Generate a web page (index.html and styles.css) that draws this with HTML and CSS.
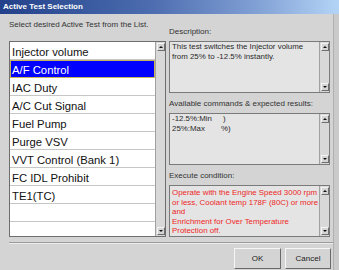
FILE: index.html
```html
<!DOCTYPE html>
<html lang="en">
<head>
  <meta charset="UTF-8">
  <title>Active Test Selection</title>
  <link rel="stylesheet" href="styles.css">
</head>
<body>
  <div class="window">
    <div class="titlebar">Active Test Selection</div>
    <div class="body">
      <div class="main">
        <div class="panes">
          <div class="left">
            <p class="hint">Select desired Active Test from the List.</p>
            <div class="listbox">
              <ul class="items">
                <li>Injector volume</li>
                <li class="selected">A/F Control</li>
                <li>IAC Duty</li>
                <li>A/C Cut Signal</li>
                <li>Fuel Pump</li>
                <li>Purge VSV</li>
                <li>VVT Control (Bank 1)</li>
                <li>FC IDL Prohibit</li>
                <li>TE1(TC)</li>
                <li></li>
                <li></li>
              </ul>
              <div class="scrollbar">
                <span class="arrow up"></span>
                <span class="arrow down"></span>
              </div>
            </div>
          </div>

          <div class="right">
            <p class="label">Description:</p>
            <div class="textbox">
              <div class="text">This test switches the Injector volume<br>from 25% to -12.5% instantly.</div>
              <div class="scrollbar">
                <span class="arrow up"></span>
                <span class="arrow down"></span>
              </div>
            </div>

            <p class="label">Available commands &amp; expected results:</p>
            <div class="textbox">
              <div class="text">
                <span class="cmd">-12.5%:Min</span>)<br>
                <span class="cmd short">25%:Max</span>%)
              </div>
              <div class="scrollbar">
                <span class="arrow up"></span>
                <span class="arrow down"></span>
              </div>
            </div>

            <p class="label">Execute condition:</p>
            <div class="textbox cond">
              <div class="text">Operate with the Engine Speed 3000 rpm<br>or less, Coolant temp 178F (80C) or more<br>and<br>Enrichment for Over Temperature<br>Protection off.</div>
              <div class="scrollbar">
                <span class="arrow up"></span>
                <span class="arrow down"></span>
              </div>
            </div>
          </div>
        </div>

        <div class="footer">
          <button class="btn ok">OK</button>
          <button class="btn cancel">Cancel</button>
        </div>
      </div>
      <div class="edge"></div>
    </div>
  </div>
</body>
</html>
```

FILE: styles.css
```css
body {
  margin: 0;
  font-family: "Liberation Sans", Arial, sans-serif;
  background-color: #d4d4d4;
}

.window {
  width: 339px;
  height: 270px;
  display: flex;
  flex-direction: column;
  overflow: hidden;
}

.titlebar {
  height: 14px;
  line-height: 14px;
  padding-left: 3px;
  color: #ffffff;
  font-size: 8px;
  font-weight: bold;
  background: linear-gradient(90deg, #22418a 0%, #4d6db0 45%, #809fd4 75%, #b4d4f6 100%);
}

.body {
  flex: 1;
  display: flex;
}

.main {
  width: 333px;
}

.edge {
  flex: 1;
  border-left: 1px solid #b0b0b0;
  background-color: #cacaca;
}

.panes {
  display: flex;
  gap: 3px;
  height: 228px;
  padding-left: 9px;
}

/* left: list of tests */
.left {
  width: 157px;
  padding-top: 6px;
}

.hint {
  margin: 0 0 12px;
  font-size: 8px;
  line-height: 9px;
  color: #333333;
}

.listbox {
  height: 196px;
  box-sizing: border-box;
  border: 1px solid #6e6e6e;
  background-color: #ffffff;
  display: flex;
  overflow: hidden;
}

.items {
  flex: 1;
  margin: 0;
  padding: 0;
  list-style: none;
}

.items li {
  height: 18px;
  box-sizing: border-box;
  padding: 3px 0 0 2px;
  border-bottom: 1px solid #c6c6c6;
  font-size: 11.3px;
  line-height: 14px;
  color: #111111;
  white-space: nowrap;
}

.items li.selected {
  background-color: #0000ff;
  color: #ffffff;
  outline: 1px solid #c8b45a;
  outline-offset: -1px;
}

/* scrollbars */
.scrollbar {
  width: 10px;
  box-sizing: border-box;
  padding: 1px 0;
  border-left: 1px solid #a0a0a0;
  background-color: #d8d8d8;
  display: flex;
  flex-direction: column;
  justify-content: space-between;
  align-items: center;
}

.arrow {
  width: 8px;
  height: 8px;
  box-sizing: border-box;
  border: 1px solid;
  border-color: #f4f4f4 #6e6e6e #6e6e6e #f4f4f4;
  background-color: #d4d4d4;
  display: flex;
  align-items: center;
  justify-content: center;
}

.arrow::after {
  content: "";
  border-left: 2px solid transparent;
  border-right: 2px solid transparent;
}

.arrow.up::after {
  border-bottom: 2px solid #111111;
}

.arrow.down::after {
  border-top: 2px solid #111111;
}

/* right: description boxes */
.right {
  width: 161px;
  padding-top: 13px;
}

.label {
  margin: 0 0 5px;
  font-size: 8px;
  line-height: 9px;
  color: #333333;
  white-space: nowrap;
}

.textbox {
  height: 52px;
  box-sizing: border-box;
  margin-bottom: 6px;
  border: 1px solid #7a7a7a;
  background-color: #e4e4e4;
  display: flex;
}

.textbox .text {
  flex: 1;
  padding: 0 0 0 2px;
  font-size: 7.9px;
  line-height: 10px;
  color: #2a2a2a;
  white-space: nowrap;
  overflow: hidden;
}

.textbox .scrollbar {
  width: 10px;
  padding: 1px 0 1px 1px;
}

.cmd {
  display: inline-block;
  width: 51px;
}

.cmd.short {
  width: 49px;
}

.cond .text {
  padding-top: 2px;
  line-height: 9.6px;
  color: #ee2626;
}

/* bottom buttons */
.footer {
  margin: 0 0 0 9px;
  padding: 5px 2px 0 0;
  border-top: 1px solid #9c9c9c;
  box-shadow: inset 0 1px 0 #ececec;
  display: flex;
  justify-content: flex-end;
  gap: 4px;
}

.btn {
  height: 21px;
  padding: 0;
  border: 1px solid;
  border-color: #f6f6f6 #6a6a6a #6a6a6a #f6f6f6;
  background-color: #d4d4d4;
  font-family: "Liberation Sans", Arial, sans-serif;
  font-size: 8px;
  color: #222222;
}

.ok {
  width: 47px;
}

.cancel {
  width: 46px;
}
```
